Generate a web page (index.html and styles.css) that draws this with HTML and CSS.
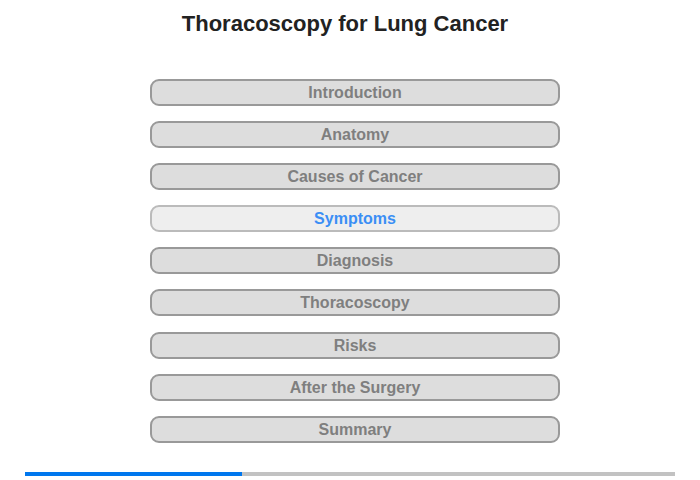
FILE: index.html
```html
<!DOCTYPE html>
<html>
<head>
<meta charset="utf-8">
<link rel="stylesheet" href="styles.css">
</head>
<body>
<div class="page">
  <h1 class="title">Thoracoscopy for Lung Cancer</h1>
  <nav class="menu">
    <div class="item">Introduction</div>
    <div class="item">Anatomy</div>
    <div class="item">Causes of Cancer</div>
    <div class="item active">Symptoms</div>
    <div class="item">Diagnosis</div>
    <div class="item">Thoracoscopy</div>
    <div class="item">Risks</div>
    <div class="item">After the Surgery</div>
    <div class="item">Summary</div>
  </nav>
  <div class="progress"><div class="fill" style="width:33.4%"></div></div>
</div>
</body>
</html>
```
FILE: styles.css
```css
html, body {
  margin: 0;
  padding: 0;
  background: #fff;
}
.page {
  width: 700px;
  height: 480px;
  font-family: "Liberation Sans", Arial, sans-serif;
  display: flex;
  flex-direction: column;
}
.title {
  margin: 11px 0 0 0;
  font-size: 22px;
  line-height: 26px;
  font-weight: bold;
  color: #222;
  text-align: center;
  padding-right: 10px;
}
.menu {
  margin: 42px 0 0 150px;
  width: 410px;
  display: flex;
  flex-direction: column;
  gap: 15.1px;
}
.item {
  box-sizing: border-box;
  height: 27px;
  border: 2px solid #999;
  border-radius: 9px;
  background: #ddd;
  color: #7f7f7f;
  font-size: 16px;
  font-weight: bold;
  line-height: 24px;
  text-align: center;
}
.item.active {
  background: #eee;
  border-color: #bbb;
  color: #3b8ef5;
}
.progress {
  margin: 29px 0 0 25px;
  width: 650px;
  height: 4px;
  background: #c2c2c2;
}
.fill {
  height: 100%;
  background: #0077ee;
}
```
